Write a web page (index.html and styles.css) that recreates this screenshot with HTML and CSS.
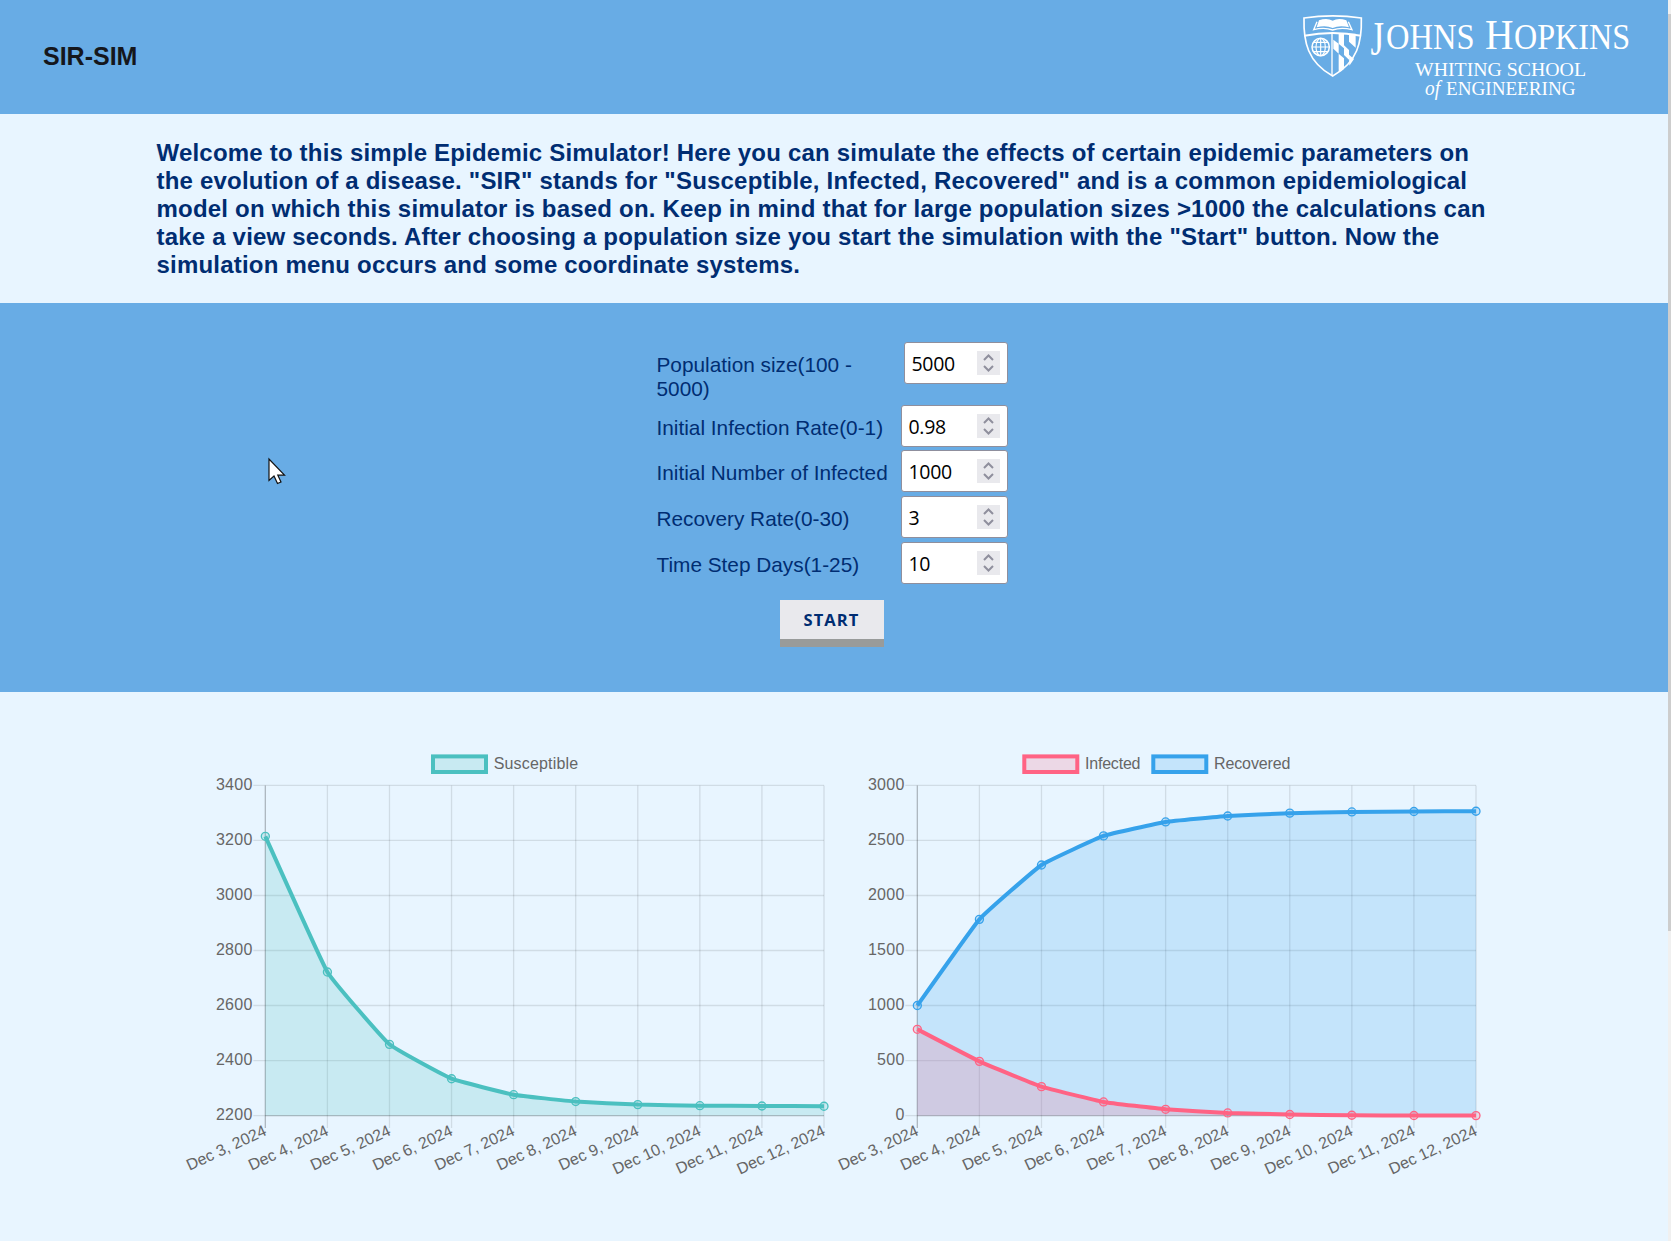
FILE: index.html
```html
<!DOCTYPE html>
<html lang="en">
<head>
<meta charset="utf-8">
<title>SIR-SIM</title>
<link rel="stylesheet" href="styles.css">
</head>
<body>
<header class="header">
  <h1 class="title">SIR-SIM</h1>
  <svg class="logo" width="350" height="114" viewBox="1300 0 350 114" role="img" aria-label="Johns Hopkins Whiting School of Engineering">
    <g transform="translate(1295 5) scale(.33333)" fill="none" stroke="#fff" stroke-width="5">
      <path d="M27 39Q113 26 199 39C201 110 188 172 113 213C38 172 25 110 27 39Z"/>
      <path d="M28 92Q113 76 198 92" stroke-width="6"/>
      <path d="M66 50L56 74Q88 66 113 75Q138 66 171 74L160 50" stroke-width="4"/>
      <path d="M72 46Q96 38 113 47Q130 38 154 46L162 67Q134 60 113 69Q92 60 65 67Z" fill="#fff" stroke="none"/>
      <circle cx="77" cy="126" r="26" stroke-width="4.5"/>
      <path d="M77 100V152M51 126H103M56 112H98M56 140H98" stroke-width="3.5"/>
      <ellipse cx="77" cy="126" rx="14" ry="26" stroke-width="3.5"/>
      <path d="M111 84V210" stroke-width="4"/>
      <g fill="#fff" stroke="none">
        <path d="M115 104L131 116V146L115 131Z"/>
        <path d="M131 84H147V130L131 116Z"/>
        <path d="M162 86H177V124L162 110Z"/>
        <path d="M147 121L162 135V164L147 150Z"/>
        <path d="M177 86H182V128L177 124Z"/>
        <path d="M131 146L147 160V192L131 202Z"/>
        <path d="M162 149L177 162L163 182Z"/>
      </g>
    </g>
    <g class="logo-text">
      <text x="1370.500" y="54.500" font-size="49" textLength="13.500" lengthAdjust="spacingAndGlyphs">J</text>
      <text x="1386" y="48.600" font-size="36" textLength="88.500" lengthAdjust="spacingAndGlyphs">OHNS</text>
      <text x="1485" y="48.600" font-size="42.500" textLength="28.500" lengthAdjust="spacingAndGlyphs">H</text>
      <text x="1514" y="48.600" font-size="36" textLength="116" lengthAdjust="spacingAndGlyphs">OPKINS</text>
      <text x="1415" y="75.600" font-size="19" textLength="171" lengthAdjust="spacingAndGlyphs">WHITING SCHOOL</text>
      <text x="1425" y="95" font-size="20" font-style="italic" textLength="15" lengthAdjust="spacingAndGlyphs">of</text>
      <text x="1446" y="95" font-size="19" textLength="129.500" lengthAdjust="spacingAndGlyphs">ENGINEERING</text>
    </g>
  </svg>
</header>

<section class="intro">
  <p class="intro-text">Welcome to this simple Epidemic Simulator! Here you can simulate the effects of certain epidemic parameters on<br>the evolution of a disease. "SIR" stands for "Susceptible, Infected, Recovered" and is a common epidemiological<br>model on which this simulator is based on. Keep in mind that for large population sizes &gt;1000 the calculations can<br>take a view seconds. After choosing a population size you start the simulation with the "Start" button. Now the<br>simulation menu occurs and some coordinate systems.</p>
</section>

<section class="menu">
  <form class="form">
    <div class="row row-tall"><label class="label">Population size(100 -<br>5000)</label>
      <div class="field field-narrow"><span class="value">5000</span><svg class="spin" viewBox="0 0 23 24"><path d="M7 9l4.500-4.500L16 9M7 15l4.500 4.500L16 15"/></svg></div></div>
    <div class="row"><label class="label">Initial Infection Rate(0-1)</label>
      <div class="field"><span class="value">0.98</span><svg class="spin" viewBox="0 0 23 24"><path d="M7 9l4.500-4.500L16 9M7 15l4.500 4.500L16 15"/></svg></div></div>
    <div class="row row-mid"><label class="label">Initial Number of Infected</label>
      <div class="field"><span class="value">1000</span><svg class="spin" viewBox="0 0 23 24"><path d="M7 9l4.500-4.500L16 9M7 15l4.500 4.500L16 15"/></svg></div></div>
    <div class="row row-mid"><label class="label">Recovery Rate(0-30)</label>
      <div class="field"><span class="value">3</span><svg class="spin" viewBox="0 0 23 24"><path d="M7 9l4.500-4.500L16 9M7 15l4.500 4.500L16 15"/></svg></div></div>
    <div class="row row-mid"><label class="label">Time Step Days(1-25)</label>
      <div class="field"><span class="value">10</span><svg class="spin" viewBox="0 0 23 24"><path d="M7 9l4.500-4.500L16 9M7 15l4.500 4.500L16 15"/></svg></div></div>
    <button class="start" type="button">START</button>
  </form>
</section>

<main class="charts">
  <svg class="chart" id="susceptible" width="652" height="440"></svg>
  <svg class="chart" id="infected" width="652" height="440"></svg>
</main>

<div class="scrollbar"><div class="thumb"></div></div>
<svg class="cursor" width="20" height="28" viewBox="-2 -2 20 28"><path d="M0 0V21.500L5 17L8.500 24.500L12 23L8.800 16.200H15.500Z"/></svg>
<script src="chart.js"></script>
</body>
</html>
```
FILE: styles.css
```css
* { box-sizing: border-box; }
html { height: 100%; overflow: hidden; }
body {
  margin: 0;
  height: 1241px;
  overflow: hidden;
  background: #e8f5ff;
  font-family: "Liberation Sans", Arial, sans-serif;
  color: #002d72;
}
.header {
  height: 114px;
  padding: 0 21px 0 43px;
  display: flex;
  justify-content: space-between;
  background: #68ace5;
}
.title {
  margin: 42px 0 0;
  font-size: 25px;
  line-height: 28px;
  color: #15171c;
}
.logo { flex: none; overflow: visible; }
.logo-text {
  fill: #fff;
  font-family: "Liberation Serif", "Times New Roman", serif;
}
.intro { height: 189px; padding: 25px 0 0 156.500px; }
.intro-text {
  margin: 0;
  font-size: 24px;
  line-height: 28px;
  font-weight: bold;
  letter-spacing: .2px;
  white-space: nowrap;
}
.menu {
  height: 389px;
  padding-top: 39px;
  background: #68ace5;
  display: flex;
  justify-content: center;
}
.form { width: 352px; margin-right: 8px; display: flex; flex-direction: column; }
.row { display: flex; justify-content: space-between; height: 45px; }
.row-tall { height: 63px; }
.row-mid { height: 46px; }
.label { padding: 11px 0 0 1px; font-size: 20.800px; line-height: 24px; white-space: nowrap; }
.field {
  width: 107px;
  height: 42px;
  padding: 0 7px;
  display: flex;
  align-items: center;
  justify-content: space-between;
  background: #fff;
  border: 1px solid #8f8f9d;
  border-radius: 3px;
}
.field-narrow { width: 104px; }
.value {
  font-family: "Open Sans", "Noto Sans", sans-serif;
  font-size: 19.500px;
  letter-spacing: -.3px;
  color: #000;
}
.spin { width: 23px; height: 24px; background: #e9e9ed; }
.spin path { fill: none; stroke: #8f8f9d; stroke-width: 2; }
.start {
  width: 104px;
  height: 47px;
  margin: 12px 0 0 124px;
  padding: 0;
  border: 0;
  border-bottom: 8px solid #999b9a;
  background: #e9e9ed;
  color: #002d72;
  font: 700 16.500px/39px "Open Sans", "Noto Sans", sans-serif;
  letter-spacing: 1.100px;
}
.charts { display: flex; padding: 48px 0 0 180px; }
.chart { flex: none; }
.chart text { font-size: 16px; fill: #666; }
.grid { stroke: rgba(0, 0, 0, .1); stroke-width: 1.330; }
.axis { stroke: rgba(0, 0, 0, .25); stroke-width: 1.330; }
.scrollbar {
  position: absolute;
  top: 0;
  right: 0;
  width: 3px;
  height: 1241px;
  padding-top: 14px;
  background: #f0f0f0;
}
.thumb { height: 917px; background: #cdcdcd; }
.cursor { position: absolute; left: 267px; top: 456.500px; }
.cursor path { fill: #fff; stroke: #111; stroke-width: 1.200; }
```
FILE: chart.js
```js
const NS = 'http://www.w3.org/2000/svg';
const LEFT = 85.33, RIGHT = 644, TOP = 45.4, BOTTOM = 375.6;
const STEP = (RIGHT - LEFT) / 9;
const TENSION = 0.1;

function add(parent, tag, attrs, text) {
  const el = document.createElementNS(NS, tag);
  for (const key in attrs) el.setAttribute(key, attrs[key]);
  if (text !== undefined) el.textContent = text;
  parent.appendChild(el);
  return el;
}

function curve(points) {
  let d = `M${points[0]}`;
  for (let i = 0; i < points.length - 1; i++) {
    const a = points[i], b = points[i + 1];
    const before = points[i - 1] || a, after = points[i + 2] || b;
    d += `C${a[0] + (b[0] - before[0]) * TENSION / 2} ${a[1] + (b[1] - before[1]) * TENSION / 2}`
      + ` ${b[0] - (after[0] - a[0]) * TENSION / 2} ${b[1] - (after[1] - a[1]) * TENSION / 2} ${b[0]} ${b[1]}`;
  }
  return d;
}

function draw(id, min, max, step, series) {
  const svg = document.getElementById(id);
  for (let v = min; v <= max; v += step) {
    const y = BOTTOM - (v - min) / (max - min) * (BOTTOM - TOP);
    add(svg, 'line', { x1: LEFT - 12, x2: v === min ? LEFT : RIGHT, y1: y, y2: y, class: 'grid' });
    add(svg, 'text', { x: 72.3, y: y + 4.8, 'text-anchor': 'end', textLength: String(v).length * 9.1 }, v);
  }
  for (let i = 0; i < 10; i++) {
    const x = LEFT + i * STEP;
    add(svg, 'line', { x1: x, x2: x, y1: TOP, y2: BOTTOM + 12.5, class: i ? 'grid' : 'axis' });
    add(svg, 'text', { 'text-anchor': 'end', transform: `translate(${x} 389.5) rotate(-25)`, y: 5.4 },
      `Dec ${i + 3}, 2024`);
  }
  add(svg, 'line', { x1: LEFT, x2: RIGHT, y1: BOTTOM, y2: BOTTOM, class: 'axis' });

  for (const s of series) {
    s.points = s.data.map((v, i) => [LEFT + i * STEP, BOTTOM - (v - min) / (max - min) * (BOTTOM - TOP)]);
    const fill = `rgba(${s.rgb},.2)`, stroke = `rgb(${s.rgb})`;
    const d = curve(s.points);
    add(svg, 'path', { d: `${d}V${BOTTOM}H${LEFT}Z`, fill });
    add(svg, 'path', { d, fill: 'none', stroke, 'stroke-width': 4, 'stroke-linejoin': 'round' });
    for (const [cx, cy] of s.points) add(svg, 'circle', { cx, cy, r: 4, fill, stroke, 'stroke-width': 1.33 });
    add(svg, 'rect', { x: s.legend, y: 16.4, width: 53, height: 15.6, fill, stroke, 'stroke-width': 4 });
    add(svg, 'text', { x: s.legend + 60.7, y: 29.3, textLength: s.width }, s.name);
  }
}

draw('susceptible', 2200, 3400, 200, [
  { name: 'Susceptible', rgb: '75,192,192', legend: 253, width: 84.5,
    data: [3215, 2722, 2459, 2334, 2276, 2251, 2240, 2236, 2235, 2234] },
]);
draw('infected', 0, 3000, 500, [
  { name: 'Recovered', rgb: '54,162,235', legend: 321.3, width: 76.5,
    data: [1000, 1783, 2277, 2541, 2668, 2722, 2748, 2759, 2763, 2765] },
  { name: 'Infected', rgb: '255,99,132', legend: 192.3, width: 55.5,
    data: [784, 493, 263, 124, 57, 24, 10, 3, 1, 0] },
]);
```
